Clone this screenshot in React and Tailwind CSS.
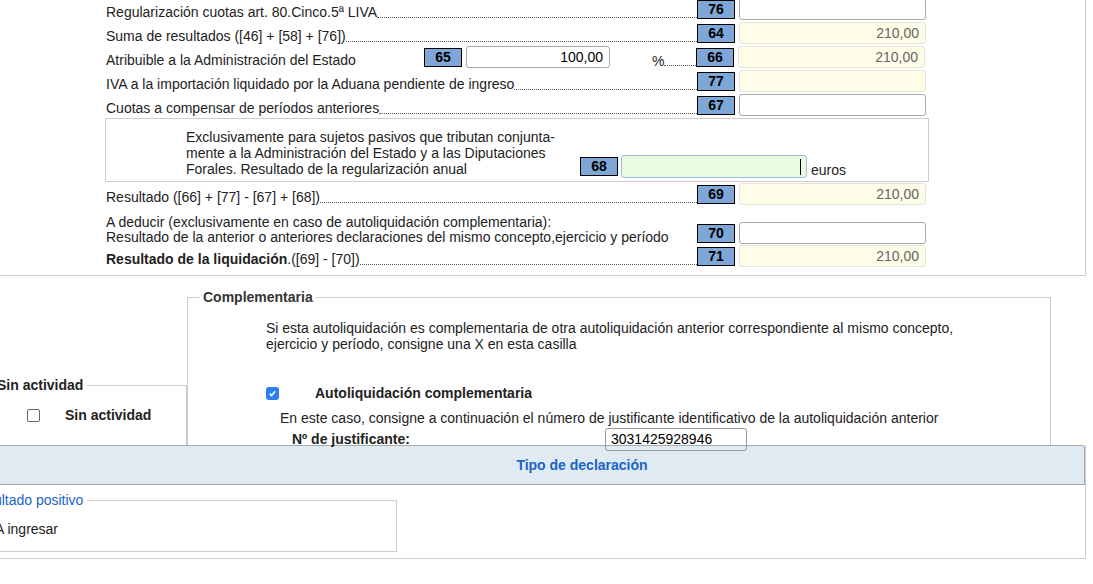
export default function App() {
  const Box = ({ n }) => (
    <div className="w-[38px] h-[19px] bg-[#7ea7d8] border border-black text-black font-bold text-[14px] leading-[17px] text-center shrink-0">{n}</div>
  );
  const Inp = ({ v, ro, w = "w-[187px]" }) => (
    <div className={`${w} h-[22px] rounded-[3px] border text-right pr-[6px] text-[14px] leading-[20px] shrink-0 ${ro ? "bg-[#fdfde8] border-[#e4e4d8] text-[#666]" : "bg-white border-[#aaa] text-black"}`}>{v}</div>
  );
  const Dots = () => <div className="flex-1 border-b border-dotted border-[#555] mb-[3px] min-w-[4px]" />;
  const Row = ({ label, n, v, ro }) => (
    <div className="flex items-end h-[24px] pl-[106px]">
      <div className="flex items-end w-[591px] h-full">
        <span className="whitespace-nowrap leading-[16px] pb-[1px]">{label}</span>
        <Dots />
      </div>
      <div className="self-center flex items-center gap-[4px]"><Box n={n} /><Inp v={v} ro={ro} /></div>
    </div>
  );
  return (
    <div className="w-[1093px] h-[584px] overflow-hidden bg-white text-[14px] text-[#222]" style={{ fontFamily: '"Liberation Sans", Arial, sans-serif' }}>
      <div className="w-[1086px] border-r border-b border-[#ccc] h-[279px] -mt-[3px]">
        <Row label="Regularización cuotas art. 80.Cinco.5ª LIVA" n="76" v="" />
        <Row label="Suma de resultados ([46] + [58] + [76])" n="64" v="210,00" ro />
        <div className="flex items-end h-[24px] pl-[106px]">
          <span className="w-[318px] leading-[16px] pb-[1px]">Atribuible a la Administración del Estado</span>
          <div className="self-center flex items-center gap-[4px]"><Box n="65" /><Inp v="100,00" w="w-[144px]" /></div>
          <span className="ml-[42px] leading-[16px]">%</span>
          <Dots />
          <div className="self-center flex items-center gap-[4px] mr-[160px]"><Box n="66" /><Inp v="210,00" ro /></div>
        </div>
        <Row label="IVA a la importación liquidado por la Aduana pendiente de ingreso" n="77" v="" ro />
        <Row label="Cuotas a compensar de períodos anteriores" n="67" v="" />
        <div className="ml-[105px] w-[824px] h-[64px] mt-[1px] border border-[#ccc] flex items-end pb-[3px]">
          <p className="ml-[80px] w-[394px] leading-[16px] mb-[1px] whitespace-nowrap">Exclusivamente para sujetos pasivos que tributan conjunta-<br />mente a la Administración del Estado y a las Diputaciones<br />Forales. Resultado de la regularización anual</p>
          <div className="self-end mb-[2px]"><Box n="68" /></div>
          <div className="ml-[3px] w-[186px] h-[23px] rounded-[3px] border border-[#9bbbe0] bg-[#e9fbe2] flex justify-end items-center pr-[5px]"><span className="w-px h-[16px] bg-black" /></div>
          <span className="ml-[4px] leading-[16px]">euros</span>
        </div>
        <Row label="Resultado ([66] + [77] - [67] + [68])" n="69" v="210,00" ro />
        <div className="flex items-end h-[38px] pl-[106px] pt-[8px]">
          <p className="w-[591px] leading-[15px] mb-[-1px] whitespace-nowrap">A deducir (exclusivamente en caso de autoliquidación complementaria):<br />Resultado de la anterior o anteriores declaraciones del mismo concepto,ejercicio y período</p>
          <div className="self-end flex items-center gap-[4px]"><Box n="70" /><Inp v="" /></div>
        </div>
        <Row label={<><b>Resultado de la liquidación</b>.([69] - [70])</>} n="71" v="210,00" ro />
      </div>

      <div className="flex items-end h-[169px]">
        <fieldset className="ml-[-10px] w-[197px] h-[70px] border border-[#ccc] border-b-0 pl-[6px]">
          <legend className="font-bold text-[14px] pr-[4px]">Sin actividad</legend>
          <label className="flex items-center mt-[9px] ml-[30px]">
            <span className="w-[13px] h-[13px] border border-[#666] rounded-[2px] bg-white" />
            <span className="ml-[25px] font-bold text-[14px]">Sin actividad</span>
          </label>
        </fieldset>
        <fieldset className="w-[864px] h-[158px] border border-[#ccc] border-b-0 pl-[12px]">
          <legend className="font-bold text-[14px] text-[#333] px-[3px]">Complementaria</legend>
          <div className="pl-[66px]">
            <p className="leading-[16px] mt-[12px]">Si esta autoliquidación es complementaria de otra autoliquidación anterior correspondiente al mismo concepto,<br />ejercicio y período, consigne una X en esta casilla</p>
            <div className="flex items-center mt-[31px]">
              <span className="w-[13px] h-[13px] rounded-[3px] bg-[#2e7df6] flex items-center justify-center">
                <svg width="9" height="9" viewBox="0 0 10 10"><path d="M2 5.2l2 2 4-4.8" stroke="white" strokeWidth="1.8" fill="none" /></svg>
              </span>
              <span className="ml-[36px] font-bold text-[14px]">Autoliquidación complementaria</span>
            </div>
            <p className="ml-[14px] mt-[6px] text-[14px] leading-[16px]">En este caso, consigne a continuación el número de justificante identificativo de la autoliquidación anterior</p>
            <div className="flex items-center mt-[2px]">
              <span className="ml-[26px] w-[313px] font-bold text-[14px]">Nº de justificante:</span>
              <div className="w-[142px] h-[23px] border border-[#999] rounded-[3px] px-[5px] text-[14px] leading-[21px] text-black">3031425928946</div>
            </div>
          </div>
        </fieldset>
      </div>

      <div className="w-[1086px] h-[114px] border border-l-0 border-[#ccc] border-t-0">
        <div className="h-[40px] bg-[#dfeaf3] border-y border-r border-[#aaa] rounded-tr-[3px] flex items-center justify-center font-bold text-[14px] text-[#1a64c6] pl-[80px]">Tipo de declaración</div>
        <fieldset className="ml-[-40px] mt-[5px] w-[437px] h-[62px] border border-[#ccc] pl-[8px]">
          <legend className="text-[14px] text-[#1a64c6] pr-[4px]">Resultado positivo</legend>
          <p className="text-[14px] mt-[8px] ml-[26px]">A ingresar</p>
        </fieldset>
      </div>
    </div>
  );
}
